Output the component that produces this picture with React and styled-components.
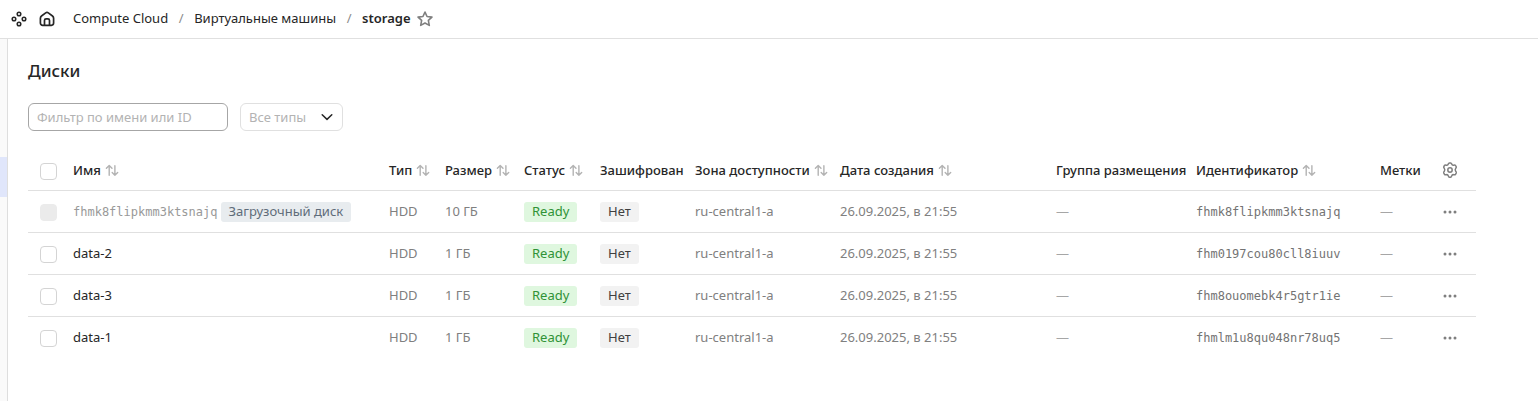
import React from 'react';
import styled, { createGlobalStyle, css } from 'styled-components';

const GlobalStyle = createGlobalStyle`
  *, *::before, *::after { box-sizing: border-box; }
  html, body, #root { height: 100%; }
  body {
    margin: 0;
    background: #fff;
    color: #262626;
    font-family: "Noto Sans", "Open Sans", sans-serif;
    font-size: 13px;
    line-height: 18px;
  }
  button, input, select { font: inherit; }
`;

const Page = styled.div`
  display: flex;
  flex-direction: column;
  min-height: 100%;
`;

const Header = styled.header`
  display: flex;
  align-items: center;
  height: 39px;
  padding: 0 5px;
  border-bottom: 1px solid #e0e0e0;
`;

const IconButton = styled.button`
  display: inline-flex;
  align-items: center;
  justify-content: center;
  flex: none;
  width: 28px;
  height: 28px;
  padding: 0;
  border: 0;
  border-radius: 6px;
  background: none;
  color: ${({ $muted }) => ($muted ? '#7f7f7f' : '#262626')};
  cursor: pointer;
  vertical-align: middle;

  &:hover { background: #f2f2f2; }
`;

const Breadcrumbs = styled.ol`
  display: flex;
  margin: 0 0 0 12px;
  padding: 0 0 2px;
  list-style: none;
`;

const Crumb = styled.li`
  display: flex;
  white-space: nowrap;

  & + &::before {
    content: '/';
    width: 26px;
    text-align: center;
    color: #8c8c8c;
  }
`;

const CrumbLink = styled.a`
  color: inherit;
  text-decoration: none;
  font-weight: ${({ $current }) => ($current ? 600 : 400)};
`;

const Body = styled.div`
  display: flex;
  flex: 1;
`;

const Sidebar = styled.aside`
  flex: none;
  width: 8px;
  padding-top: 118px;
  border-right: 1px solid #dedede;
  background: #fafafa;
`;

const SidebarActive = styled.div`
  height: 40px;
  background: #e0e6fb;
`;

const Main = styled.main`
  flex: 1;
  min-width: 0;
  padding: 20px 62px 20px 20px;
`;

const Title = styled.h1`
  margin: 0;
  font-size: 17px;
  line-height: 24px;
  font-weight: 500;
`;

const Filters = styled.div`
  display: flex;
  gap: 12px;
  margin-top: 20px;
`;

const fieldStyle = css`
  height: 28px;
  padding: 0 8px;
  border-radius: 6px;
  background: #fff;
  outline: none;
`;

const SearchInput = styled.input`
  ${fieldStyle}
  width: 200px;
  border: 1px solid #a6a6a6;
  color: #262626;

  &::placeholder { color: #b3b3b3; opacity: 1; }
`;

const SelectBox = styled.div`
  display: grid;
  align-items: center;
  width: 103px;

  > * { grid-area: 1 / 1; }
  > svg {
    justify-self: end;
    margin-right: 8px;
    pointer-events: none;
  }
`;

const TypeSelect = styled.select`
  ${fieldStyle}
  width: 100%;
  appearance: none;
  border: 1px solid #e0e0e0;
  color: #b3b3b3;
`;

const Table = styled.table`
  width: 100%;
  min-width: 1400px;
  margin-top: 19px;
  border-collapse: separate;
  border-spacing: 0;
  table-layout: fixed;
`;

const cellStyle = css`
  padding: 0 8px;
  text-align: left;
  vertical-align: middle;
  white-space: nowrap;
`;

const HeadCell = styled.th`
  ${cellStyle}
  height: 41px;
  border-bottom: 1px solid #e0e0e0;
  font-weight: 500;
`;

const Row = styled.tr`
  > td { border-bottom: 1px solid #e0e0e0; }
  &:last-child > td { border-color: transparent; }
`;

const Cell = styled.td`
  ${cellStyle}
  height: 42px;
  color: ${({ $tone }) => ($tone === 'hint' ? '#a6a6a6' : '#808080')};
`;

const TextCell = styled(Cell)`
  padding-bottom: 2px;
`;

const SortButton = styled.button`
  display: inline-flex;
  align-items: center;
  gap: 4px;
  padding: 0;
  border: 0;
  background: none;
  color: inherit;
  font-weight: inherit;
  cursor: pointer;

  > svg { color: #b3b3b3; }
`;

const Checkbox = styled.input`
  display: block;
  appearance: none;
  width: 17px;
  height: 17px;
  margin: 2px 0 0 4px;
  border: 1px solid #d4d4d4;
  border-radius: 4px;
  background: #fff;

  &:checked { background: #3d63dd; border-color: #3d63dd; }
  &:disabled { background: #ebebeb; border-color: #ebebeb; }
`;

const labelTones = {
  success: css`background: #dff7df; color: #2f9236;`,
  normal: css`background: #f2f2f2; color: #404040;`,
  utility: css`background: #e8ecef; color: #5f6c7a;`,
};

const Label = styled.span`
  display: inline-block;
  height: 20px;
  padding: 0 8px;
  border-radius: 3px;
  line-height: 19px;
  vertical-align: middle;
  ${({ $tone }) => labelTones[$tone]}
`;

const DiskName = styled.span`
  color: #262626;
`;

const NameGroup = styled.div`
  display: flex;
  align-items: center;
  gap: 3px;
`;

const Mono = styled.code`
  font-family: "DejaVu Sans Mono", "Liberation Mono", monospace;
  font-size: 12px;
  color: ${({ $hint }) => ($hint ? '#999' : '#737373')};
`;

const Icon = ({ children, size = 16, width = 1.5 }) => (
  <svg width={size} height={size} viewBox="0 0 16 16" fill="none" stroke="currentColor"
    strokeWidth={width} strokeLinecap="round" strokeLinejoin="round" aria-hidden="true">
    {children}
  </svg>
);

const ServicesIcon = () => (
  <Icon>
    <circle cx="8" cy="3" r="1.8" />
    <circle cx="3" cy="8" r="1.8" />
    <circle cx="13" cy="8" r="1.8" />
    <circle cx="8" cy="13" r="1.8" />
  </Icon>
);

const HomeIcon = () => (
  <Icon width={1.7}>
    <path d="M1.4 7.2c0-.9.4-1.7 1.1-2.2L6.7 1.9a2.2 2.2 0 0 1 2.6 0L13.5 5c.7.5 1.1 1.3 1.1 2.2v4.9a2.2 2.2 0 0 1-2.2 2.2H3.6a2.2 2.2 0 0 1-2.2-2.2z" />
    <path d="M5.5 14.2V9.4c0-.9.7-1.6 1.6-1.6h1.8c.9 0 1.6.7 1.6 1.6v4.8" />
  </Icon>
);

const StarIcon = () => (
  <Icon width={1.6}>
    <path d="M8 1.1l2.05 4.4 4.9.6-3.6 3.35.95 4.9L8 12l-4.3 2.35.95-4.9-3.6-3.35 4.9-.6z" />
  </Icon>
);

const ChevronIcon = () => (
  <Icon><path d="M3.2 5.8l4.8 4.6 4.8-4.6" /></Icon>
);

const SortIcon = () => (
  <Icon size={14} width={1.6}>
    <path d="M4.8 14V3M1.6 6l3.2-3.2L8 6M11.3 3v11M8.2 10.8l3.1 3.2 3.2-3.2" />
  </Icon>
);

const GearIcon = () => (
  <Icon width={1.5}>
    <path d="M6.3 2.1Q6.6.9 7.4.9h1.2q.8 0 1.1 1.2.5 1.5 2 1.1 1.4-.4 1.8.3l.7 1.2q.4.8-.5 1.7-1 1.4 0 2.9.9.9.5 1.8l-.7 1.2q-.4.7-1.8.4-1.5-.4-2 1.2-.3 1.3-1.1 1.3H7.4q-.8 0-1.1-1.3-.5-1.6-2-1.2-1.4.3-1.8-.4l-.7-1.2q-.4-.9.5-1.8 1-1.5 0-2.9-.9-.9-.5-1.7l.7-1.2q.4-.7 1.8-.3 1.5.4 2-1.1z" />
    <circle cx="8" cy="8" r="2.2" />
  </Icon>
);

const MoreIcon = () => (
  <svg width="16" height="16" viewBox="0 0 16 16" fill="currentColor" aria-hidden="true">
    <circle cx="3" cy="8" r="1.5" />
    <circle cx="8" cy="8" r="1.5" />
    <circle cx="13" cy="8" r="1.5" />
  </svg>
);

const columns = [
  { title: 'Имя', width: 316, sortable: true },
  { title: 'Тип', width: 56, sortable: true },
  { title: 'Размер', width: 79, sortable: true },
  { title: 'Статус', width: 76, sortable: true },
  { title: 'Зашифрован', width: 95 },
  { title: 'Зона доступности', width: 145, sortable: true },
  { title: 'Дата создания', width: 216, sortable: true },
  { title: 'Группа размещения', width: 140 },
  { title: 'Идентификатор', width: 184, sortable: true },
  { title: 'Метки', width: 56 },
];

const disks = [
  { id: 'fhmk8flipkmm3ktsnajq', size: '10 ГБ', boot: true },
  { id: 'fhm0197cou80cll8iuuv', name: 'data-2', size: '1 ГБ' },
  { id: 'fhm8ouomebk4r5gtr1ie', name: 'data-3', size: '1 ГБ' },
  { id: 'fhmlm1u8qu048nr78uq5', name: 'data-1', size: '1 ГБ' },
];

const DiskRow = ({ disk }) => (
  <Row>
    <Cell><Checkbox type="checkbox" disabled={disk.boot} aria-label={disk.name || disk.id} /></Cell>
    {disk.boot ? (
      <Cell>
        <NameGroup>
          <Mono $hint>{disk.id}</Mono>
          <Label $tone="utility">Загрузочный диск</Label>
        </NameGroup>
      </Cell>
    ) : (
      <TextCell><DiskName>{disk.name}</DiskName></TextCell>
    )}
    <TextCell>HDD</TextCell>
    <TextCell>{disk.size}</TextCell>
    <Cell><Label $tone="success">Ready</Label></Cell>
    <Cell><Label $tone="normal">Нет</Label></Cell>
    <TextCell>ru-central1-a</TextCell>
    <TextCell>26.09.2025, в 21:55</TextCell>
    <TextCell $tone="hint">—</TextCell>
    <Cell><Mono>{disk.id}</Mono></Cell>
    <TextCell $tone="hint">—</TextCell>
    <Cell><IconButton $muted type="button" aria-label="Действия"><MoreIcon /></IconButton></Cell>
  </Row>
);

export default function App() {
  return (
    <Page>
      <GlobalStyle />
      <Header>
        <IconButton type="button" aria-label="Все сервисы"><ServicesIcon /></IconButton>
        <IconButton type="button" aria-label="Главная"><HomeIcon /></IconButton>
        <nav>
          <Breadcrumbs>
            <Crumb><CrumbLink href="#compute">Compute Cloud</CrumbLink></Crumb>
            <Crumb><CrumbLink href="#instances">Виртуальные машины</CrumbLink></Crumb>
            <Crumb><CrumbLink href="#storage" $current aria-current="page">storage</CrumbLink></Crumb>
          </Breadcrumbs>
        </nav>
        <IconButton $muted type="button" aria-label="В избранное"><StarIcon /></IconButton>
      </Header>
      <Body>
        <Sidebar><SidebarActive /></Sidebar>
        <Main>
          <Title>Диски</Title>
          <Filters>
            <SearchInput type="text" placeholder="Фильтр по имени или ID" aria-label="Фильтр по имени или ID" />
            <SelectBox>
              <TypeSelect aria-label="Тип диска" defaultValue="all">
                <option value="all">Все типы</option>
              </TypeSelect>
              <ChevronIcon />
            </SelectBox>
          </Filters>
          <Table>
            <colgroup>
              <col width="37" />
              {columns.map((c) => <col key={c.title} width={c.width} />)}
              <col width="48" />
            </colgroup>
            <thead>
              <tr>
                <HeadCell><Checkbox type="checkbox" aria-label="Выбрать все" /></HeadCell>
                {columns.map((c) => (
                  <HeadCell key={c.title}>
                    {c.sortable ? <SortButton type="button">{c.title}<SortIcon /></SortButton> : c.title}
                  </HeadCell>
                ))}
                <HeadCell><IconButton $muted type="button" aria-label="Настройки таблицы"><GearIcon /></IconButton></HeadCell>
              </tr>
            </thead>
            <tbody>
              {disks.map((d) => <DiskRow key={d.id} disk={d} />)}
            </tbody>
          </Table>
        </Main>
      </Body>
    </Page>
  );
}
